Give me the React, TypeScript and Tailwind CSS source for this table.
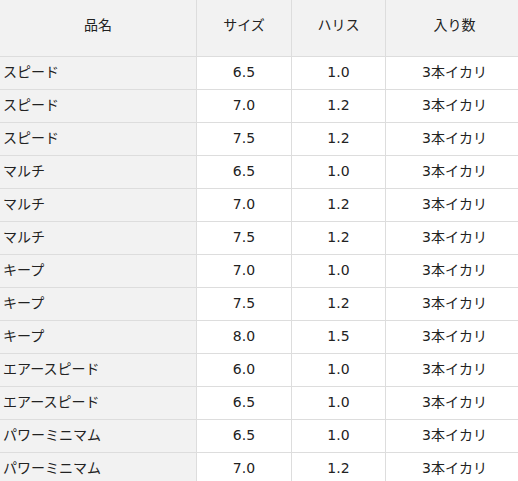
const rows: [string, string, string, string][] = [
  ["スピード", "6.5", "1.0", "3本イカリ"],
  ["スピード", "7.0", "1.2", "3本イカリ"],
  ["スピード", "7.5", "1.2", "3本イカリ"],
  ["マルチ", "6.5", "1.0", "3本イカリ"],
  ["マルチ", "7.0", "1.2", "3本イカリ"],
  ["マルチ", "7.5", "1.2", "3本イカリ"],
  ["キープ", "7.0", "1.0", "3本イカリ"],
  ["キープ", "7.5", "1.2", "3本イカリ"],
  ["キープ", "8.0", "1.5", "3本イカリ"],
  ["エアースピード", "6.0", "1.0", "3本イカリ"],
  ["エアースピード", "6.5", "1.0", "3本イカリ"],
  ["パワーミニマム", "6.5", "1.0", "3本イカリ"],
  ["パワーミニマム", "7.0", "1.2", "3本イカリ"],
];

const grid = "grid grid-cols-[197px_95px_94px_137px]";

export default function App() {
  return (
    <div className="w-[518px] h-[481px] overflow-hidden bg-white text-[14px] leading-[20px] text-[#222] font-['DejaVu_Sans','Noto_Sans_CJK_JP',sans-serif]">
      <div className="w-[523px]">
        <div className={`${grid} h-[57px] bg-[#f2f2f2] border-b border-[#dddddd]`}>
          <div className="flex items-center justify-center pb-[7px] border-r border-[#dddddd]">品名</div>
          <div className="flex items-center justify-center pb-[7px] border-r border-[#dddddd]">サイズ</div>
          <div className="flex items-center justify-center pb-[7px] border-r border-[#dddddd]">ハリス</div>
          <div className="flex items-center justify-center pb-[7px]">入り数</div>
        </div>
        {rows.map((r, i) => (
          <div key={i} className={`${grid} h-[33px] border-b border-[#dddddd]`}>
            <div className="flex items-center pl-[3px] pb-[3px] bg-[#f2f2f2] border-r border-[#dddddd]">{r[0]}</div>
            <div className="flex items-center justify-center pb-[3px] border-r border-[#dddddd]">{r[1]}</div>
            <div className="flex items-center justify-center pb-[3px] border-r border-[#dddddd]">{r[2]}</div>
            <div className="flex items-center justify-center pb-[3px]">{r[3]}</div>
          </div>
        ))}
      </div>
    </div>
  );
}
